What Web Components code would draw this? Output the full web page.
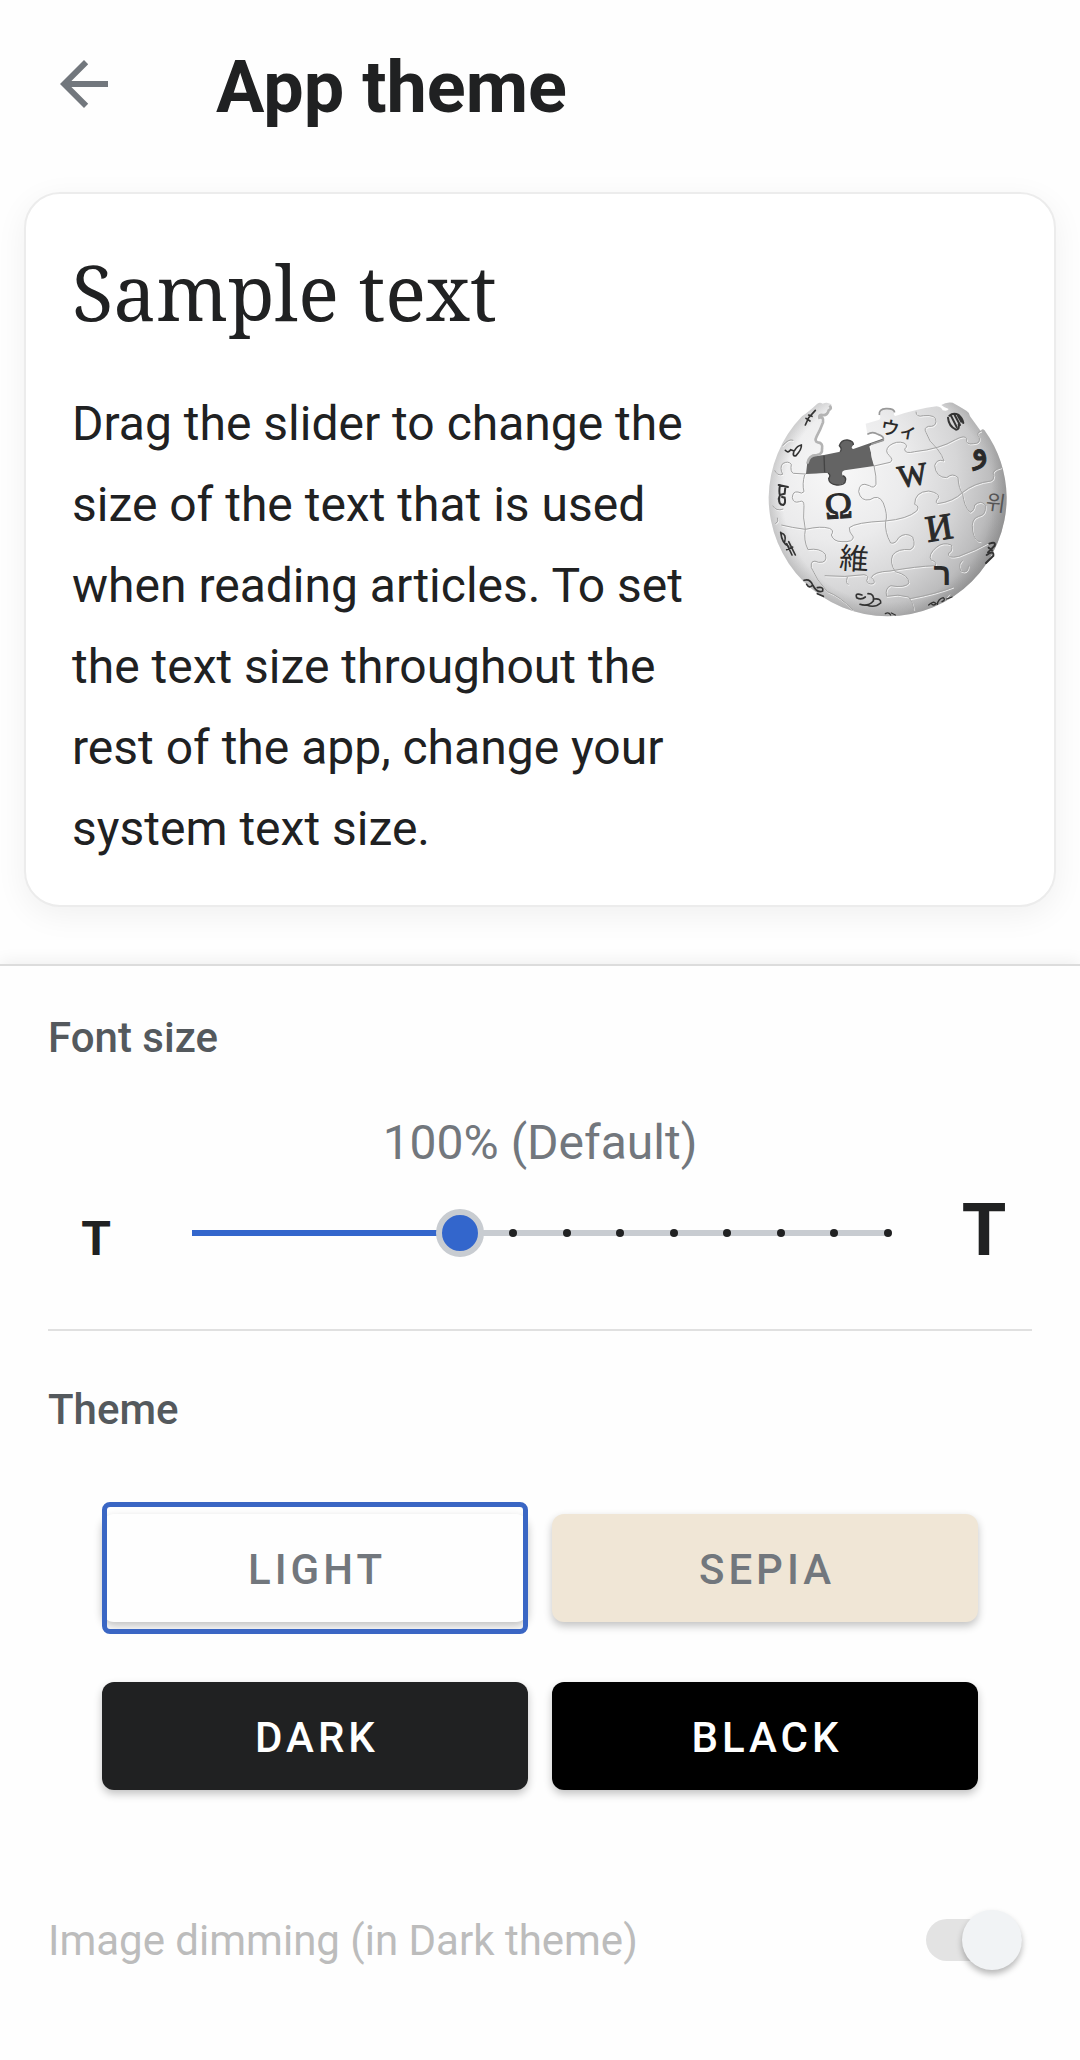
<!DOCTYPE html>
<html lang="en">
<head>
<meta charset="utf-8">
<meta name="viewport" content="width=device-width, initial-scale=1">
<title>App theme</title>
<style>
  html, body { margin: 0; }
  body {
    min-height: 100vh;
    background: #fefefe;
    color: #202122;
    font-family: Roboto, "Liberation Sans", sans-serif;
  }
</style>
</head>
<body>
<theme-screen></theme-screen>

<template id="theme-screen">
  <style>
    :host { display: flex; flex-direction: column; min-height: 100vh; }
    main { display: flex; flex-direction: column; flex: 1; }
    .preview { padding: 24px 24px 57px; }
    .values { display: block; margin-top: 53px; text-align: center; font-size: 48px; line-height: 56px; color: #72777d; }
    .themes { display: grid; grid-template-columns: 1fr 1fr; gap: 60px 24px; margin: 80px 54px 0; }
  </style>
  <app-toolbar>App theme</app-toolbar>
  <main>
    <div class="preview">
      <sample-card>
        <span slot="title">Sample text</span>
        Drag the slider to change the size of the text that is used when reading articles. To set the text size throughout the rest of the app, change your system text size.
        <wiki-globe slot="image"></wiki-globe>
      </sample-card>
    </div>
    <settings-sheet>
      <settings-section heading="Font size">
        <span class="values">100% (Default)</span>
        <size-slider value="5" max="13"></size-slider>
      </settings-section>
      <settings-section heading="Theme" divided>
        <div class="themes">
          <theme-button kind="light" selected>LIGHT</theme-button>
          <theme-button kind="sepia">SEPIA</theme-button>
          <theme-button kind="dark">DARK</theme-button>
          <theme-button kind="black">BLACK</theme-button>
        </div>
      </settings-section>
      <setting-switch>Image dimming (in Dark theme)</setting-switch>
    </settings-sheet>
  </main>
</template>

<template id="app-toolbar">
  <style>
    :host { display: block; }
    header { display: flex; align-items: center; gap: 72px; height: 168px; padding: 0 24px; }
    button { display: grid; place-items: center; width: 120px; height: 120px; padding: 0; border: 0; background: none; color: #72777d; }
    svg { width: 72px; height: 72px; }
    h1 { margin: 0; padding-top: 8px; font-size: 72px; line-height: 84px; font-weight: 700; }
  </style>
  <header>
    <button type="button" aria-label="Back">
      <svg viewBox="0 0 24 24" fill="currentColor"><path d="M20 11H7.8l5.6-5.6L12 4l-8 8 8 8 1.4-1.4L7.8 13H20z"/></svg>
    </button>
    <h1><slot></slot></h1>
  </header>
</template>

<template id="sample-card">
  <style>
    :host { display: block; }
    article { padding: 50px 46px 36px; border: 2px solid #ececec; border-radius: 36px; background: #fff; box-shadow: 0 8px 32px rgba(0, 0, 0, .06); }
    h2 { margin: 0; font: 400 76px/96px "Noto Serif", "Droid Serif", "DejaVu Serif", serif; }
    .row { display: flex; align-items: flex-start; gap: 36px; margin-top: 43px; }
    p { flex: 1; margin: 0; font-size: 48px; line-height: 81px; }
    ::slotted(wiki-globe) { margin-top: 19px; }
  </style>
  <article>
    <h2><slot name="title"></slot></h2>
    <div class="row">
      <p><slot></slot></p>
      <slot name="image"></slot>
    </div>
  </article>
</template>

<template id="settings-sheet">
  <style>
    :host { display: flex; flex-direction: column; flex: 1; padding: 48px 48px 80px; border-top: 2px solid #dcdcdc; background: #fefefe; box-shadow: 0 -2px 16px rgba(0, 0, 0, .07); }
  </style>
  <slot></slot>
</template>

<template id="settings-section">
  <style>
    :host { display: block; }
    :host([divided]) { margin-top: 50px; padding-top: 55px; border-top: 2px solid #e0e0e0; }
    h2 { margin: 0; font-size: 42px; line-height: 48px; font-weight: 500; color: #54595d; }
  </style>
  <h2></h2>
  <slot></slot>
</template>

<template id="size-slider">
  <style>
    :host { display: flex; align-items: baseline; gap: 24px; margin-top: 20px; }
    .glyph { width: 96px; text-align: center; font-weight: 700; line-height: 80px; }
    .small { font-size: 48px; }
    .large { font-size: 72px; }
    .control { display: grid; align-items: center; flex: 1; align-self: flex-end; margin-bottom: 22px; }
    .control > * { grid-area: 1 / 1; }
    .track { height: 6px; margin: 0 24px; background: linear-gradient(to right, #36c var(--fill), #c8ccd1 var(--fill)); }
    .ticks { display: flex; justify-content: space-between; margin: 0 20px; }
    .ticks i { width: 8px; height: 8px; border-radius: 50%; }
    .ticks .on { background: #202122; }
    input { appearance: none; width: 100%; height: 48px; margin: 0; background: none; }
    input::-webkit-slider-runnable-track { height: 48px; background: none; }
    input::-webkit-slider-thumb { appearance: none; box-sizing: border-box; width: 48px; height: 48px; border: 6px solid #c8ccd1; border-radius: 50%; background: #36c; }
  </style>
  <span class="glyph small" aria-hidden="true">T</span>
  <div class="control">
    <div class="track"></div>
    <div class="ticks"></div>
    <input type="range" min="0" aria-label="Font size">
  </div>
  <span class="glyph large" aria-hidden="true">T</span>
</template>

<template id="theme-button">
  <style>
    :host { display: block; }
    button { position: relative; width: 100%; height: 108px; padding: 4px 0 0 4px; border: 0; border-radius: 12px; background: var(--fill); color: var(--ink); font: 500 42px/48px Roboto, "Liberation Sans", sans-serif; letter-spacing: 4px; box-shadow: 0 4px 8px rgba(0, 0, 0, .24); }
    :host([kind="light"]) { --fill: #fefefe; --ink: #72777d; }
    :host([kind="sepia"]) { --fill: #f0e6d6; --ink: #72777d; }
    :host([kind="dark"]) { --fill: #202122; --ink: #fff; }
    :host([kind="black"]) { --fill: #000; --ink: #fff; }
    :host([selected]) button::after { content: ""; position: absolute; inset: -12px 0; border: 5px solid #3a66c4; border-radius: 8px; }
  </style>
  <button type="button"><slot></slot></button>
</template>

<template id="setting-switch">
  <style>
    :host { display: block; margin-top: 119px; }
    label { display: flex; align-items: center; justify-content: space-between; height: 64px; font-size: 42px; line-height: 48px; color: #bcbcbc; }
    input { appearance: none; display: flex; align-items: center; justify-content: flex-end; width: 96px; height: 42px; margin: 0 10px 2px 0; border-radius: 21px; background: #e3e3e3; }
    input::before { content: ""; flex: none; width: 60px; height: 60px; border-radius: 50%; background: #f1f3f5; box-shadow: 0 4px 6px rgba(0, 0, 0, .28); }
  </style>
  <label for="toggle"><slot></slot><input id="toggle" type="checkbox" role="switch" checked disabled></label>
</template>

<template id="wiki-globe">
  <style>
    :host { display: block; flex: none; width: 240px; }
    svg { display: block; width: 100%; }
    text { font-family: "Liberation Serif", serif; fill: #2a2a2a; text-anchor: middle; }
    .inked { stroke: #2a2a2a; stroke-width: 3; }
  </style>
  <svg viewBox="84 65 720 645" role="img" aria-label="Globe made of puzzle pieces">
    <defs>
      <radialGradient id="ball" gradientUnits="userSpaceOnUse" cx="290" cy="270" r="530">
        <stop offset="0" stop-color="#f8f8f8"/>
        <stop offset=".4" stop-color="#ebebec"/>
        <stop offset=".68" stop-color="#d6d6d7"/>
        <stop offset=".88" stop-color="#bcbcbd"/>
        <stop offset="1" stop-color="#9a9a9b"/>
      </radialGradient>
      <radialGradient id="rim" gradientUnits="userSpaceOnUse" cx="443" cy="351" r="357">
        <stop offset=".88" stop-color="#777" stop-opacity="0"/>
        <stop offset="1" stop-color="#777" stop-opacity=".28"/>
      </radialGradient>
      <path id="shell" d="M186 108Q206 94 232 70Q240 64 248 70Q262 64 274 72Q278 84 268 90Q266 106 250 104Q240 100 236 110Q252 108 251 124Q244 146 232 168Q222 186 236 184Q252 186 248 204Q252 222 232 226Q208 222 202 246L198 281L264 278Q274 284 266 294Q266 312 290 314Q316 316 317 298Q318 290 308 286Q302 272 314 270L402 257Q390 226 392 194L430 181Q434 166 414 162Q398 152 382 162L377 130L418 118Q424 110 418 104Q416 86 438 85Q462 84 464 96Q458 104 466 107Q530 86 590 78Q604 80 608 90Q622 94 626 86Q612 82 604 74Q618 64 638 67Q662 80 680 92Q688 96 690 108L722 152Q726 144 733 149A357 357 0 0 1 800 351A357 357 0 0 1 86 351A357 357 0 0 1 186 108Z"/>
      <g id="seams">
        <path d="M194 283Q186 312 192 334Q186 342 174 335Q158 332 157 352Q160 370 178 364Q192 358 192 376Q188 414 196 447Q190 480 204 508Q240 502 256 522Q264 548 236 546Q210 534 214 562Q230 600 262 634Q300 648 340 690"/>
        <path d="M104 270Q112 288 128 282Q118 262 128 250Q144 240 154 252Q150 274 160 279L198 281"/>
        <path d="M160 180Q146 174 128 196M124 434Q156 442 196 447Q244 436 268 444Q284 450 274 464Q280 484 306 484Q340 486 340 470Q326 454 328 442Q346 426 436 422Q502 416 530 392Q540 378 524 372Q524 334 566 332Q598 338 596 352Q584 364 592 370Q640 364 668 336Q702 308 752 302Q762 300 762 286Q752 270 784 262"/>
        <path d="M402 257Q410 290 408 312Q402 326 388 316Q358 302 356 334Q362 364 390 358Q416 340 430 368Q444 404 437 424Q434 456 452 488Q466 492 476 472Q496 454 518 470Q530 500 510 508Q474 504 458 524Q448 548 466 574Q506 584 507 608Q494 624 452 616Q434 624 440 648Q474 640 506 650Q520 668 522 688"/>
        <path d="M402 257L450 246Q462 240 448 226Q432 212 448 196Q470 180 492 188Q506 196 494 206Q494 222 524 214Q600 206 646 178Q676 162 680 176Q676 194 700 190Q722 190 718 172Q706 156 724 152"/>
        <path d="M528 94Q528 112 550 106Q590 102 588 124Q586 140 566 138Q550 142 558 156Q566 184 592 206Q608 226 612 242Q590 234 584 256Q588 292 620 292Q638 276 654 292Q656 326 668 340Q672 378 690 396Q704 390 704 374Q722 358 736 374Q740 404 716 408Q692 414 698 452Q704 484 722 484"/>
        <path d="M254 586Q316 592 372 583Q390 586 380 600Q382 614 400 610Q408 604 394 592Q400 574 450 572Q530 558 586 556Q592 544 574 540Q562 524 590 500Q610 484 634 494Q640 512 626 518Q620 536 656 528Q706 510 752 484"/>
        <path d="M98 376Q108 394 130 386M106 430Q118 424 112 412M322 590Q316 612 326 612M668 540Q654 548 662 572Q684 582 686 556M628 640Q616 650 618 662M510 655Q590 640 640 620"/>
      </g>
    </defs>
    <path d="M200 230L252 224L300 214Q308 206 298 196Q304 178 322 179Q342 182 340 194Q330 204 340 206L432 174L430 184L388 198L404 260L316 274Q304 280 318 292Q318 314 290 315Q262 312 264 294Q276 284 264 278L194 284Z" fill="#646464"/>
    <path d="M252 226L254 276M300 214Q308 206 298 196Q304 178 322 179Q342 182 340 194" fill="none" stroke="#444" stroke-width="4"/>
    <use href="#shell" fill="url(#ball)"/>
    <use href="#shell" fill="url(#rim)"/>
    <path d="M268 76Q278 84 266 90Q262 106 248 104Q236 102 238 112Q252 108 249 126Q242 146 230 168Q222 184 234 186Q250 188 246 206Q248 222 230 224Q206 224 202 250" fill="none" stroke="#b4b4b4" stroke-width="8"/>
    <path d="M418 104Q416 86 438 85Q462 84 464 96M382 162Q398 152 414 162Q434 168 430 180L394 192" fill="none" stroke="#999" stroke-width="5"/>
    <path d="M264 278Q274 284 266 294Q266 312 290 314Q316 316 317 298Q318 290 308 286" fill="none" stroke="#3f3f3f" stroke-width="4"/>
    <g fill="none" stroke-width="3">
      <use href="#seams" x="2" y="3" stroke="#fff" stroke-opacity=".75"/>
      <use href="#seams" stroke="#a3a3a3"/>
    </g>
    <text class="inked" transform="translate(298 414) rotate(-4)" font-size="112">Ω</text>
    <text class="inked" transform="translate(522 315) rotate(-9)" font-size="94">W</text>
    <text class="inked" transform="translate(603 479) rotate(-9)" font-size="112">И</text>
    <text transform="translate(340 567) rotate(4)" font-size="88" style="font-family:'Noto Sans CJK JP',sans-serif">維</text>
    <text transform="translate(474 168) rotate(10)" font-size="56" font-weight="500" style="font-family:'Noto Sans CJK JP',sans-serif">ウィ</text>
    <text transform="translate(607 613)" font-size="92" font-weight="700" style="font-family:'Liberation Sans','DejaVu Sans',sans-serif">ר</text>
    <text class="inked" transform="translate(722 240) rotate(-14)" font-size="104" style="font-family:'DejaVu Sans',sans-serif">و</text>
    <text transform="translate(764 390) rotate(8)" font-size="64" style="font-family:'Noto Sans CJK KR',sans-serif;fill:#555">위</text>
    <g fill="none" stroke="#333" stroke-width="5" stroke-linecap="round">
      <path d="M196 134L206 112L226 90M198 114L210 122M206 104L216 108"/>
      <path d="M136 210Q144 220 152 208L162 212Q156 230 168 226Q186 206 184 194Q172 196 164 210"/>
      <path d="M116 314L144 320M120 314Q116 336 120 344L134 340L136 320M120 344L116 356M118 350Q114 374 130 374Q138 368 134 352L126 350" stroke-width="6"/>
      <path d="M122 456Q126 490 146 498M124 458Q140 462 134 484M146 484L166 524M140 508L158 500M140 490L156 524"/>
      <path d="M192 600Q210 594 218 614Q208 626 200 612M218 614Q232 640 248 632Q252 618 232 622M232 640L250 648"/>
      <path d="M366 644Q344 636 350 652Q364 660 376 650M384 640Q404 640 400 662Q384 680 360 672M404 656Q424 654 422 668Q404 684 380 674"/>
      <path d="M628 106Q640 96 656 104Q668 114 670 128M624 112Q626 138 648 148Q660 146 656 132M634 108L650 140M644 104L660 134M654 106L664 124" stroke-width="6"/>
      <path d="M748 490Q768 482 764 496L744 516M740 524Q762 508 760 526L738 548M746 502L756 510" stroke-width="6"/>
      <path d="M566 674Q580 660 588 670Q580 678 574 670M592 672Q594 656 610 652Q618 658 606 664M620 656L636 650M436 700Q446 694 452 704M454 698L466 704" stroke-width="4"/>
    </g>
  </svg>
</template>

<script>
  class Templated extends HTMLElement {
    constructor() {
      super();
      const template = document.getElementById(this.localName);
      this.attachShadow({ mode: "open" }).append(document.importNode(template.content, true));
    }
  }

  class SettingsSection extends Templated {
    connectedCallback() {
      this.shadowRoot.querySelector("h2").textContent = this.getAttribute("heading");
    }
  }

  class SizeSlider extends Templated {
    connectedCallback() {
      const max = Number(this.getAttribute("max"));
      const input = this.shadowRoot.querySelector("input");
      input.max = max;
      input.value = this.getAttribute("value");
      input.addEventListener("input", () => this.draw());
      this.draw();
    }
    draw() {
      const input = this.shadowRoot.querySelector("input");
      const max = Number(input.max);
      const value = Number(input.value);
      this.style.setProperty("--fill", (value / max * 100) + "%");
      const ticks = Array.from({ length: max + 1 }, (_, i) => {
        const tick = document.createElement("i");
        if (i > value) tick.className = "on";
        return tick;
      });
      this.shadowRoot.querySelector(".ticks").replaceChildren(...ticks);
    }
  }

  class ThemeButton extends Templated {
    connectedCallback() {
      this.shadowRoot.querySelector("button").setAttribute("aria-pressed", this.hasAttribute("selected"));
    }
  }

  customElements.define("app-toolbar", class extends Templated {});
  customElements.define("wiki-globe", class extends Templated {});
  customElements.define("sample-card", class extends Templated {});
  customElements.define("settings-sheet", class extends Templated {});
  customElements.define("settings-section", SettingsSection);
  customElements.define("size-slider", SizeSlider);
  customElements.define("theme-button", ThemeButton);
  customElements.define("setting-switch", class extends Templated {});
  customElements.define("theme-screen", class extends Templated {});
</script>
</body>
</html>
